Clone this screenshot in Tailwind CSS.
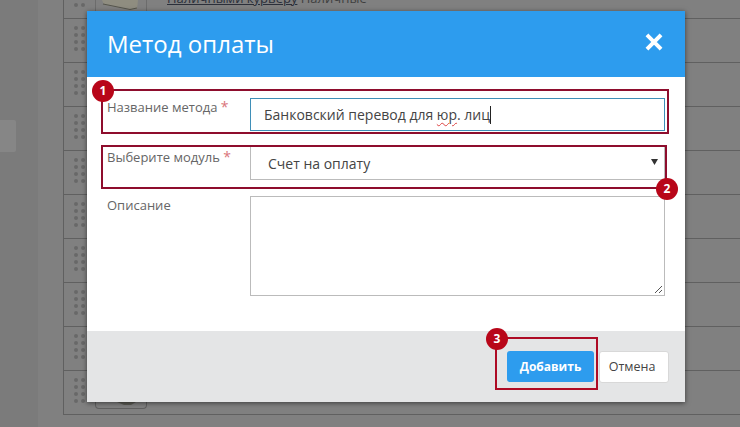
<!DOCTYPE html>
<html>
<head>
<meta charset="utf-8">
<script src="https://cdn.jsdelivr.net/npm/@tailwindcss/browser@4"></script>
</head>
<body class="m-0 overflow-hidden bg-[#808080] font-['Open_Sans',sans-serif]">
<div class="relative w-[740px] h-[427px] overflow-hidden bg-[#808080]">
  <!-- dimmed page behind -->
  <div class="absolute left-0 top-0 w-[38px] h-[427px] bg-[#7b7b7b]"></div>
  <div class="absolute left-0 top-[120px] w-[16px] h-[32px] rounded-r-[2px] bg-[#868686]"></div>
  <div class="absolute left-[63px] top-[-25px] w-[700px] border-l border-[#606060]">
    <div class="h-[44px] border-b border-[#606060] flex items-center pl-[10px]"><span class="grid grid-cols-2 gap-x-[3px] gap-y-[3px] w-[11px] -mt-[5px]"><i class="size-[4px] rounded-full bg-[#686868]"></i><i class="size-[4px] rounded-full bg-[#686868]"></i><i class="size-[4px] rounded-full bg-[#686868]"></i><i class="size-[4px] rounded-full bg-[#686868]"></i><i class="size-[4px] rounded-full bg-[#686868]"></i><i class="size-[4px] rounded-full bg-[#686868]"></i><i class="size-[4px] rounded-full bg-[#686868]"></i><i class="size-[4px] rounded-full bg-[#686868]"></i></span></div>
    <div class="h-[44px] border-b border-[#606060] flex items-center pl-[10px]"><span class="grid grid-cols-2 gap-x-[3px] gap-y-[3px] w-[11px] -mt-[5px]"><i class="size-[4px] rounded-full bg-[#686868]"></i><i class="size-[4px] rounded-full bg-[#686868]"></i><i class="size-[4px] rounded-full bg-[#686868]"></i><i class="size-[4px] rounded-full bg-[#686868]"></i><i class="size-[4px] rounded-full bg-[#686868]"></i><i class="size-[4px] rounded-full bg-[#686868]"></i><i class="size-[4px] rounded-full bg-[#686868]"></i><i class="size-[4px] rounded-full bg-[#686868]"></i></span></div>
    <div class="h-[44px] border-b border-[#606060] flex items-center pl-[10px]"><span class="grid grid-cols-2 gap-x-[3px] gap-y-[3px] w-[11px] -mt-[5px]"><i class="size-[4px] rounded-full bg-[#686868]"></i><i class="size-[4px] rounded-full bg-[#686868]"></i><i class="size-[4px] rounded-full bg-[#686868]"></i><i class="size-[4px] rounded-full bg-[#686868]"></i><i class="size-[4px] rounded-full bg-[#686868]"></i><i class="size-[4px] rounded-full bg-[#686868]"></i><i class="size-[4px] rounded-full bg-[#686868]"></i><i class="size-[4px] rounded-full bg-[#686868]"></i></span></div>
    <div class="h-[44px] border-b border-[#606060] flex items-center pl-[10px]"><span class="grid grid-cols-2 gap-x-[3px] gap-y-[3px] w-[11px] -mt-[5px]"><i class="size-[4px] rounded-full bg-[#686868]"></i><i class="size-[4px] rounded-full bg-[#686868]"></i><i class="size-[4px] rounded-full bg-[#686868]"></i><i class="size-[4px] rounded-full bg-[#686868]"></i><i class="size-[4px] rounded-full bg-[#686868]"></i><i class="size-[4px] rounded-full bg-[#686868]"></i><i class="size-[4px] rounded-full bg-[#686868]"></i><i class="size-[4px] rounded-full bg-[#686868]"></i></span></div>
    <div class="h-[44px] border-b border-[#606060] flex items-center pl-[10px]"><span class="grid grid-cols-2 gap-x-[3px] gap-y-[3px] w-[11px] -mt-[5px]"><i class="size-[4px] rounded-full bg-[#686868]"></i><i class="size-[4px] rounded-full bg-[#686868]"></i><i class="size-[4px] rounded-full bg-[#686868]"></i><i class="size-[4px] rounded-full bg-[#686868]"></i><i class="size-[4px] rounded-full bg-[#686868]"></i><i class="size-[4px] rounded-full bg-[#686868]"></i><i class="size-[4px] rounded-full bg-[#686868]"></i><i class="size-[4px] rounded-full bg-[#686868]"></i></span></div>
    <div class="h-[44px] border-b border-[#606060] flex items-center pl-[10px]"><span class="grid grid-cols-2 gap-x-[3px] gap-y-[3px] w-[11px] -mt-[5px]"><i class="size-[4px] rounded-full bg-[#686868]"></i><i class="size-[4px] rounded-full bg-[#686868]"></i><i class="size-[4px] rounded-full bg-[#686868]"></i><i class="size-[4px] rounded-full bg-[#686868]"></i><i class="size-[4px] rounded-full bg-[#686868]"></i><i class="size-[4px] rounded-full bg-[#686868]"></i><i class="size-[4px] rounded-full bg-[#686868]"></i><i class="size-[4px] rounded-full bg-[#686868]"></i></span></div>
    <div class="h-[44px] border-b border-[#606060] flex items-center pl-[10px]"><span class="grid grid-cols-2 gap-x-[3px] gap-y-[3px] w-[11px] -mt-[5px]"><i class="size-[4px] rounded-full bg-[#686868]"></i><i class="size-[4px] rounded-full bg-[#686868]"></i><i class="size-[4px] rounded-full bg-[#686868]"></i><i class="size-[4px] rounded-full bg-[#686868]"></i><i class="size-[4px] rounded-full bg-[#686868]"></i><i class="size-[4px] rounded-full bg-[#686868]"></i><i class="size-[4px] rounded-full bg-[#686868]"></i><i class="size-[4px] rounded-full bg-[#686868]"></i></span></div>
    <div class="h-[44px] border-b border-[#606060] flex items-center pl-[10px]"><span class="grid grid-cols-2 gap-x-[3px] gap-y-[3px] w-[11px] -mt-[5px]"><i class="size-[4px] rounded-full bg-[#686868]"></i><i class="size-[4px] rounded-full bg-[#686868]"></i><i class="size-[4px] rounded-full bg-[#686868]"></i><i class="size-[4px] rounded-full bg-[#686868]"></i><i class="size-[4px] rounded-full bg-[#686868]"></i><i class="size-[4px] rounded-full bg-[#686868]"></i><i class="size-[4px] rounded-full bg-[#686868]"></i><i class="size-[4px] rounded-full bg-[#686868]"></i></span></div>
    <div class="h-[44px] border-b border-[#606060] flex items-center pl-[10px]"><span class="grid grid-cols-2 gap-x-[3px] gap-y-[3px] w-[11px] -mt-[5px]"><i class="size-[4px] rounded-full bg-[#686868]"></i><i class="size-[4px] rounded-full bg-[#686868]"></i><i class="size-[4px] rounded-full bg-[#686868]"></i><i class="size-[4px] rounded-full bg-[#686868]"></i><i class="size-[4px] rounded-full bg-[#686868]"></i><i class="size-[4px] rounded-full bg-[#686868]"></i><i class="size-[4px] rounded-full bg-[#686868]"></i><i class="size-[4px] rounded-full bg-[#686868]"></i></span></div>
    <div class="h-[44px] border-b border-[#606060] flex items-center pl-[10px]"><span class="grid grid-cols-2 gap-x-[3px] gap-y-[3px] w-[11px] -mt-[5px]"><i class="size-[4px] rounded-full bg-[#686868]"></i><i class="size-[4px] rounded-full bg-[#686868]"></i><i class="size-[4px] rounded-full bg-[#686868]"></i><i class="size-[4px] rounded-full bg-[#686868]"></i><i class="size-[4px] rounded-full bg-[#686868]"></i><i class="size-[4px] rounded-full bg-[#686868]"></i><i class="size-[4px] rounded-full bg-[#686868]"></i><i class="size-[4px] rounded-full bg-[#686868]"></i></span></div>
  </div>
  <!-- thumbnail of the row cut by the modal's top edge -->
  <div class="absolute left-[95px] top-[-20px] w-[52px] h-[38px] border-x border-[#6c6c6c]"></div>
  <svg class="absolute left-[100px] top-0 w-[40px] h-[11px]" viewBox="0 0 40 11"><path d="M2 0 L4 5 L30 10 L37 9 L38 0Z" fill="#8f8d80"/><path d="M3 4 L30 9.5 L37 8" stroke="#55554e" stroke-width="1.2" fill="none"/></svg>
  <div class="absolute left-[167px] top-[-10px] text-[13px] text-[#3f3f3f] leading-[16px] whitespace-nowrap"><span class="underline text-[#2b2f3a]">Наличными курьеру</span> Наличные</div>
  <div class="absolute left-[95px] top-[402px] w-[52px] h-[7px] border border-t-0 border-[#606060] rounded-b-[4px]"><svg class="absolute left-[21px] top-0 w-[19px] h-[4px]" viewBox="0 0 19 4"><path d="M0 0 H19 L14 3 H7Z" fill="#5c5c55"/></svg></div>

  <!-- modal -->
  <div class="absolute left-[87px] top-[11px] w-[598px] h-[391px] flex flex-col bg-white shadow-[0_1px_5px_rgba(0,0,0,0.55)]">
    <div class="h-[66px] shrink-0 bg-[#2d9cee] flex items-center justify-between pl-[20px] pr-[22px] pb-[1px]">
      <h1 class="text-[24px] leading-[32px] text-white font-normal">Метод оплаты</h1>
      <svg class="size-[18px] -mt-[4px]" viewBox="0 0 18 18"><path d="M3 3 L15 15 M15 3 L3 15" stroke="#fff" stroke-width="4.2" stroke-linecap="square" fill="none" transform="translate(9 9) scale(.94) translate(-9 -9)"/></svg>
    </div>
    <div class="flex-1 flex flex-col pl-[20px] pr-[20px] pt-[21px] text-[13px] text-[#666]">
      <div class="flex h-[33px]">
        <label class="w-[143px] leading-[18px] whitespace-nowrap">Название метода <span class="text-[#d9737a] text-[14px]">*</span></label>
        <div class="relative w-[415px] h-[33px] border border-[#3f8fb8] flex items-center pl-[13px] text-[14px] text-[#444]">
          <span>Банковский перевод для <span class="underline decoration-wavy decoration-[#d44] decoration-1 underline-offset-2">юр</span>. лиц</span><span class="w-px h-[18px] bg-[#222]"></span>
        </div>
      </div>
      <div class="flex h-[33px] mt-[16px]">
        <label class="w-[143px] pt-[1px] leading-[18px] whitespace-nowrap">Выберите модуль <span class="text-[#d9737a] text-[14px]">*</span></label>
        <div class="relative w-[415px] h-[33px] border border-[#bbb] border-t-0 flex items-center justify-between pl-[17px] pr-[6px] text-[14px] text-[#444]">
          <span>Счет на оплату</span>
          <svg class="w-[7px] h-[6px] -mt-[3px]" viewBox="0 0 7 6"><path d="M0 0h7L3.5 6z" fill="#333"/></svg>
        </div>
      </div>
      <div class="flex h-[100px] mt-[16px]">
        <label class="w-[143px] leading-[18px]">Описание</label>
        <div class="relative w-[415px] h-[100px] border border-[#bbb]">
          <svg class="absolute right-[1px] bottom-[1px] size-[9px]" viewBox="0 0 9 9"><path d="M1 8 8 1M5 8 8 5" stroke="#555" stroke-width="1" fill="none"/></svg>
        </div>
      </div>
    </div>
    <div class="h-[71px] shrink-0 bg-[#e4e5e6] flex items-start justify-end gap-[5px] pt-[20px] pr-[16px]">
      <button class="w-[87px] h-[31px] rounded-[3px] bg-[#2d9cee] text-white text-[12px] font-bold">Добавить</button>
      <button class="w-[70px] h-[32px] rounded-[3px] bg-white border border-[#d8d8d8] text-[#444] text-[12.5px] pr-[4px]">Отмена</button>
    </div>
  </div>

  <!-- annotations -->
  <div class="absolute left-[101px] top-[89px] w-[568px] h-[45px] border-[2px] border-[#8e0d2d]"></div>
  <div class="absolute left-[101px] top-[145px] w-[566px] h-[44px] border-[2px] border-[#8e0d2d]"></div>
  <div class="absolute left-[495px] top-[337px] w-[103px] h-[53px] border-[2px] border-[#ae0b25]"></div>
  <div class="absolute left-[92px] top-[80px] size-[22px] rounded-full bg-[#b80619] text-white text-[12px] font-bold flex items-center justify-center">1</div>
  <div class="absolute left-[656px] top-[178px] size-[22px] rounded-full bg-[#b80619] text-white text-[12px] font-bold flex items-center justify-center">2</div>
  <div class="absolute left-[486px] top-[328px] size-[22px] rounded-full bg-[#b80619] text-white text-[12px] font-bold flex items-center justify-center">3</div>
</div>
</body>
</html>
